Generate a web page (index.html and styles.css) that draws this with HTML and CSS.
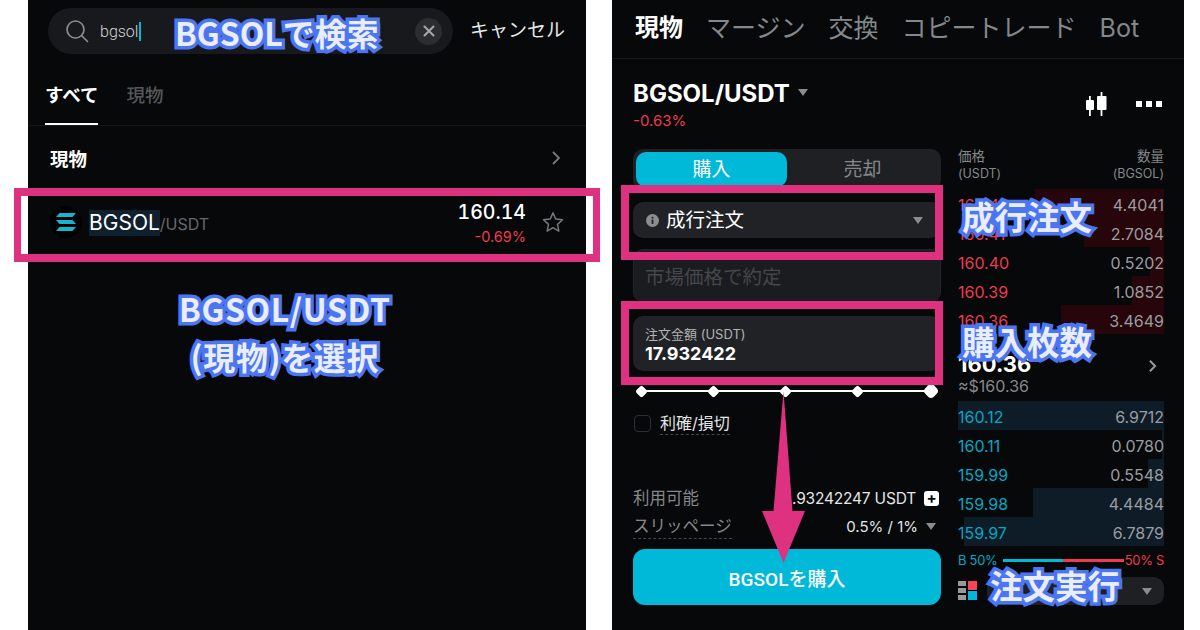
FILE: index.html
```html
<!DOCTYPE html>
<html lang="ja">
<head>
<meta charset="utf-8">
<title>BGSOL</title>
<link rel="stylesheet" href="styles.css">
</head>
<body>
<div class="stage">
  <section class="panel left">
    <div class="search-row">
      <div class="search">
        <svg class="search-icon" width="24" height="24" viewBox="0 0 24 24" fill="none" stroke="#8a8d90" stroke-width="1.7"><circle cx="10.5" cy="10.5" r="8.5"/><path d="M17 17l5.5 5.5" stroke-linecap="round"/></svg>
        <span class="query">bgsol</span><span class="caret"></span>
        <span class="clear"><svg width="12" height="12" viewBox="0 0 12 12" stroke="#a5a7a9" stroke-width="2" stroke-linecap="round"><path d="M1.5 1.5l9 9M10.5 1.5l-9 9"/></svg></span>
      </div>
      <span class="cancel">キャンセル</span>
    </div>
    <div class="tabs">
      <span class="tab active">すべて</span>
      <span class="tab">現物</span>
    </div>
    <div class="section-row">
      <span class="section-title">現物</span>
      <svg width="10" height="16" viewBox="0 0 10 16" fill="none" stroke="#77797c" stroke-width="1.8"><path d="M2 2l6 6-6 6"/></svg>
    </div>
    <div class="coin-row">
      <span class="coin-icon"><svg width="20" height="18" viewBox="0 0 20 18" fill="#14b5cf"><path d="M3.5 0H20l-3.5 4H0z"/><path d="M0 7h16.5L20 11H3.5z"/><path d="M3.5 14H20l-3.5 4H0z"/></svg></span>
      <span class="coin-name"><mark class="hit">BGSOL</mark><span class="pair">/USDT</span></span>
      <span class="coin-quote"><span class="quote-price">160.14</span><span class="quote-change">-0.69%</span></span>
      <svg class="star" width="22" height="22" viewBox="0 0 24 24" fill="none" stroke="#77797c" stroke-width="1.6" stroke-linejoin="round"><path d="M12 2l3 6.8 7.4.8-5.500 5 1.500 7.300L12 18.200 5.600 21.900l1.500-7.300-5.500-5 7.400-.8z"/></svg>
    </div>
  </section>

  <section class="panel right">
    <nav class="top-tabs">
      <span class="top-tab active">現物</span>
      <span class="top-tab">マージン</span>
      <span class="top-tab">交換</span>
      <span class="top-tab">コピートレード</span>
      <span class="top-tab">Bot</span>
    </nav>
    <header class="symbol-head">
      <div>
        <div class="symbol"><span>BGSOL/USDT</span><i class="tri tri-symbol"></i></div>
        <div class="symbol-change">-0.63%</div>
      </div>
      <div class="head-tools">
        <svg width="24" height="24" viewBox="0 0 24 24" fill="#fff"><rect x="3" y="4" width="1.8" height="20"/><rect x="0" y="8" width="8" height="10" rx="1"/><rect x="14.6" y="0" width="1.8" height="24"/><rect x="11" y="4" width="9.500" height="14" rx="1"/></svg>
        <span class="dots"><i></i><i></i><i></i></span>
      </div>
    </header>
    <div class="trade">
      <div class="form">
        <div class="toggle"><span class="buy-tab">購入</span><span class="sell-tab">売却</span></div>
        <div class="select">
          <svg width="13" height="13" viewBox="0 0 13 13"><circle cx="6.500" cy="6.500" r="6.500" fill="#8c8e91"/><rect x="5.600" y="5.500" width="1.800" height="4.500" fill="#202226"/><rect x="5.600" y="2.800" width="1.800" height="1.700" fill="#202226"/></svg>
          <span class="select-label">成行注文</span>
          <i class="tri tri-select"></i>
        </div>
        <div class="market-box">市場価格で約定</div>
        <div class="amount-box">
          <span class="amount-label">注文金額 (USDT)</span>
          <span class="amount-value">17.932422</span>
        </div>
        <div class="slider">
          <i class="stop"></i><i class="stop"></i><i class="stop"></i><i class="stop"></i><i class="stop stop-end"></i>
        </div>
        <label class="tpsl"><span class="check"></span><span class="dotted tpsl-text">利確/損切</span></label>
        <div class="info-row avail">
          <span class="info-key">利用可能</span>
          <span class="info-val clip">.93242247 USDT</span>
          <span class="plus">+</span>
        </div>
        <div class="info-row slip">
          <span class="info-key dotted">スリッページ</span>
          <span class="info-val">0.5% / 1%</span>
          <i class="tri tri-slip"></i>
        </div>
        <button class="buy-btn">BGSOLを購入</button>
      </div>

      <div class="book">
        <div class="book-head">
          <span>価格<br><small>(USDT)</small></span>
          <span class="ta-r">数量<br><small>(BGSOL)</small></span>
        </div>
        <div class="rows asks">
          <div class="row"><i class="depth" style="width:129px"></i><b>160.41</b><span>4.4041</span></div>
          <div class="row"><i class="depth" style="width:80px"></i><b>160.41</b><span>2.7084</span></div>
          <div class="row"><i class="depth" style="width:14px"></i><b>160.40</b><span>0.5202</span></div>
          <div class="row"><i class="depth" style="width:32px"></i><b>160.39</b><span>1.0852</span></div>
          <div class="row"><i class="depth" style="width:103px"></i><b>160.36</b><span>3.4649</span></div>
        </div>
        <div class="mid">
          <div><div class="mid-price">160.36</div><div class="mid-fiat">≈$160.36</div></div>
          <svg width="9" height="14" viewBox="0 0 10 16" fill="none" stroke="#9a9c9e" stroke-width="2.200"><path d="M2 2l6 6-6 6"/></svg>
        </div>
        <div class="rows bids">
          <div class="row"><i class="depth" style="width:206px"></i><b>160.12</b><span>6.9712</span></div>
          <div class="row"><i class="depth" style="width:2px"></i><b>160.11</b><span>0.0780</span></div>
          <div class="row"><i class="depth" style="width:16px"></i><b>159.99</b><span>0.5548</span></div>
          <div class="row"><i class="depth" style="width:131px"></i><b>159.98</b><span>4.4484</span></div>
          <div class="row"><i class="depth" style="width:200px"></i><b>159.97</b><span>6.7879</span></div>
        </div>
        <div class="ratio">
          <span class="ratio-b">B 50%</span>
          <span class="ratio-bar"><i></i><i></i></span>
          <span class="ratio-s">50% S</span>
        </div>
        <div class="depth-ctl">
          <span class="grid-icon"><i class="g"></i><i class="r r1"></i><i class="g"></i><i class="g"></i><i class="r r2"></i></span>
          <span class="depth-select"><i class="tri tri-depth"></i></span>
        </div>
      </div>
    </div>
  </section>

  <div class="frame frame-a"></div>
  <div class="frame frame-b"></div>
  <div class="frame frame-c"></div>
  <svg class="arrow" width="44" height="174" viewBox="0 0 44 174"><path d="M21.500 0L30.500 120H43L21.500 172 0 120H11.500z" fill="#de3180"/></svg>

  <span class="note n-search">BGSOLで検索</span>
  <span class="note n-select">BGSOL/USDT<br>(現物)を選択</span>
  <span class="note n-market">成行注文</span>
  <span class="note n-qty">購入枚数</span>
  <span class="note n-exec">注文実行</span>
</div>
</body>
</html>
```

FILE: styles.css
```css
* { box-sizing: border-box; }
html, body { margin: 0; height: 630px; overflow: hidden; background: #fff; }
body { font-family: Inter, "Noto Sans CJK JP", sans-serif; color: #fff; }
.stage { position: relative; width: 1200px; height: 630px; display: flex; padding-left: 28px; gap: 26px; overflow: hidden; }
.panel { height: 630px; background: #060809; flex: none; }
.left { width: 558px; }
.right { width: 572px; }

/* left panel */
.search-row { display: flex; align-items: center; padding: 8px 0 0 20px; gap: 17px; }
.search { width: 405px; height: 46px; border-radius: 23px; background: #17191c; display: flex; align-items: center; padding-left: 17px; }
.search-icon { flex: none; }
.query { font: 300 16px Roboto, sans-serif; color: #d4d6d8; margin-left: 11px; }
.caret { width: 2px; height: 19px; background: #00b8d8; margin-left: 1px; }
.clear { margin-left: auto; margin-right: 11px; width: 27px; height: 27px; border-radius: 50%; background: #2b2d2f; display: flex; align-items: center; justify-content: center; }
.cancel { font-size: 19px; color: #e6e7e8; line-height: 24px; }
.tabs { height: 72px; display: flex; align-items: flex-end; gap: 28px; padding-left: 17px; border-bottom: 1px solid #131517; }
.tab { font-size: 18.500px; line-height: 26px; padding-bottom: 15px; border-bottom: 2px solid transparent; color: #55585b; font-weight: 500; }
.tab.active { color: #fff; border-bottom-color: #fff; font-weight: 700; }
.section-row { height: 66px; display: flex; align-items: center; justify-content: space-between; padding: 0 25px 3px 22px; }
.section-title { font-size: 18.500px; font-weight: 700; }
.coin-row { height: 60px; display: flex; align-items: center; padding: 0 22px; }
.coin-icon { width: 32px; height: 32px; border-radius: 50%; background: #000; display: flex; align-items: center; justify-content: center; flex: none; }
.coin-name { margin: 3px 0 0 7px; font-size: 21px; line-height: 26px; display: flex; align-items: baseline; }
.hit { background: #10202c; color: #fff; }
.pair { font-size: 16px; color: #66696c; }
.coin-quote { margin: 6px 0 0 auto; display: flex; flex-direction: column; align-items: flex-end; }
.quote-price { font-size: 19.500px; line-height: 24px; font-weight: 500; font-variant-numeric: tabular-nums; }
.quote-change { font-size: 14.500px; line-height: 26px; color: #ef3a50; }
.star { margin-left: 16px; flex: none; }

/* right panel */
.top-tabs { height: 59px; display: flex; gap: 23px; padding: 10px 0 0 23px; border-bottom: 1px solid #17191b; }
.top-tab { font-size: 25px; line-height: 36px; color: #85888b; }
.top-tab.active { color: #fff; font-weight: 700; font-size: 24px; }
.symbol-head { height: 80px; display: flex; justify-content: space-between; padding: 21px 22px 0 21px; }
.symbol { font-size: 24px; font-weight: 700; line-height: 28px; display: flex; align-items: center; }
.symbol-change { font-size: 15px; line-height: 20px; color: #ef3a50; margin-top: 3px; }
.tri { display: block; width: 0; height: 0; border-left: 5.500px solid transparent; border-right: 5.500px solid transparent; border-top: 7px solid #8a8c8f; flex: none; }
.tri-symbol { margin-left: 8px; margin-top: -3px; }
.head-tools { display: flex; align-items: center; gap: 26px; height: 24px; margin-top: 12px; }
.dots { display: flex; gap: 4px; }
.dots i { width: 6px; height: 6px; background: #fff; }
.trade { display: flex; gap: 17px; padding-left: 21px; }
.form { width: 308px; flex: none; display: flex; flex-direction: column; }
.toggle { margin-top: 10px; height: 41px; background: #1e2024; border-radius: 10px; padding: 3px; display: flex; }
.buy-tab, .sell-tab { width: 151px; height: 35px; font-size: 19px; line-height: 35px; text-align: center; border-radius: 10px; }
.buy-tab { background: #00b8d8; }
.sell-tab { color: #85888b; flex: 1; }
.select { margin-top: 12px; height: 36px; background: #202226; border-radius: 10px; display: flex; align-items: center; padding: 0 18px 0 13px; }
.select-label { font-size: 19.500px; margin-left: 7px; margin-top: -4px; }
.tri-select { margin-left: auto; }
.market-box { margin-top: 11px; height: 53px; background: #1a1c1f; border: 1px solid #232528; border-radius: 10px; font-size: 19.500px; line-height: 54px; padding-left: 11px; color: #44474b; }
.amount-box { margin-top: 14px; height: 55px; background: #202226; border-radius: 10px; padding: 9px 12px; display: flex; flex-direction: column; }
.amount-label { font-size: 13px; line-height: 18px; color: #b0b2b4; }
.amount-value { font-size: 18px; line-height: 21px; font-weight: 700; }
.slider { margin: 15px 4px 0 4px; height: 10px; position: relative; display: flex; justify-content: space-between; align-items: center; background: linear-gradient(#fff, #fff) center / 100% 2px no-repeat; }
.stop { width: 9px; height: 9px; background: #fff; transform: rotate(45deg); border-radius: 2px; }
.stop-end { width: 12px; height: 12px; border-radius: 4px; }
.tpsl { margin-top: 15px; display: flex; align-items: center; gap: 9px; padding-left: 1px; height: 24px; }
.check { width: 17px; height: 17px; border: 1.500px solid #2d2f33; border-radius: 4px; }
.tpsl-text { font-size: 16px; line-height: 22px; color: #e4e5e6; }
.dotted { border-bottom: 1px dashed #44474a; }
.info-row { display: flex; align-items: center; }
.avail { margin-top: 50px; height: 26px; }
.slip { margin-top: 1px; height: 28px; }
.info-key { font-size: 16.500px; color: #85888b; line-height: 24px; }
.info-val { margin-left: auto; font-size: 15px; color: #e4e5e6; }
.clip { font-size: 15.500px; letter-spacing: -.2px; }
.plus { width: 15px; height: 15px; margin-left: 8px; margin-right: 2px; background: #fff; color: #060809; border-radius: 3px; font-size: 15px; font-weight: 700; line-height: 14px; text-align: center; }
.tri-slip { margin: 0 5px 0 8px; }
.buy-btn { margin-top: 9px; height: 56px; border: 0; border-radius: 12px; background: #00b8d8; color: #fff; font: 500 19px Roboto, "Noto Sans CJK JP", sans-serif; }

.book { width: 206px; flex: none; }
.book-head { height: 50px; padding-top: 9px; display: flex; justify-content: space-between; font-size: 13.500px; line-height: 17px; color: #85888b; }
.book-head small { font-size: 12.500px; }
.ta-r { text-align: right; }
.row { position: relative; height: 29px; padding-top: 2px; display: flex; justify-content: space-between; align-items: center; font-size: 16px; color: #9b9da0; }
.row b { position: relative; font-weight: 400; }
.row span { position: relative; }
.depth { position: absolute; right: 0; top: 0; bottom: 0; }
.asks .depth { background: #26060a; }
.asks b { color: #ef3a50; }
.bids .depth { background: #0e1c28; }
.bids b { color: #00a9c6; }
.mid { height: 67px; padding-top: 18px; display: flex; justify-content: space-between; align-items: flex-start; }
.mid > svg { margin: 7px 7px 0 0; }
.mid-price { font-size: 22px; line-height: 24px; font-weight: 700; }
.mid-fiat { font-size: 16px; line-height: 20px; color: #85888b; }
.ratio { height: 28px; display: flex; align-items: center; font-size: 13px; white-space: nowrap; letter-spacing: -.3px; }
.ratio-b { color: #00a9c6; }
.ratio-s { color: #ef3a50; margin-left: auto; }
.ratio-bar { width: 121px; height: 3px; margin-left: 5px; display: flex; }
.ratio-bar i { flex: 1; background: #00b8d8; }
.ratio-bar i + i { background: #ef3a50; }
.depth-ctl { margin-top: 3px; display: flex; align-items: center; gap: 10px; }
.grid-icon { width: 19px; height: 20px; display: grid; grid-template-columns: 8px 9px; gap: 2px; grid-auto-rows: 5px; flex: none; }
.g { background: #98999b; }
.r { grid-column: 2; }
.r1 { background: #ff4256; grid-row: 1 / span 2; height: 9px; }
.r2 { background: #00b8d8; grid-row: 2 / span 2; height: 9px; align-self: end; }
.depth-select { flex: 1; height: 28px; border-radius: 10px; background: #1e2024; display: flex; align-items: center; justify-content: flex-end; padding-right: 12px; }

/* overlays */
.frame { position: absolute; border: 8px solid #de3180; }
.frame-a { left: 14px; top: 188px; width: 586px; height: 74px; border-width: 8px 7px; }
.frame-b { left: 621px; top: 185px; width: 322px; height: 75px; }
.frame-c { left: 621px; top: 301px; width: 322px; height: 84px; }
.arrow { position: absolute; left: 762px; top: 391px; }
.note { position: absolute; font-family: "Noto Sans CJK JP", sans-serif; font-weight: 700; color: #e8edff; -webkit-text-stroke: 7px #4c75f2; paint-order: stroke fill; white-space: nowrap; text-align: center; }
.n-search { left: 175px; top: 10px; font-size: 32px; line-height: 44px; }
.n-select { left: 179px; top: 284px; font-size: 32px; line-height: 48px; letter-spacing: .6px; }
.n-market { left: 962px; top: 192px; font-size: 32.500px; line-height: 48px; }
.n-qty { left: 962px; top: 317px; font-size: 32.500px; line-height: 48px; }
.n-exec { left: 990px; top: 561px; font-size: 32.500px; line-height: 48px; }
```
